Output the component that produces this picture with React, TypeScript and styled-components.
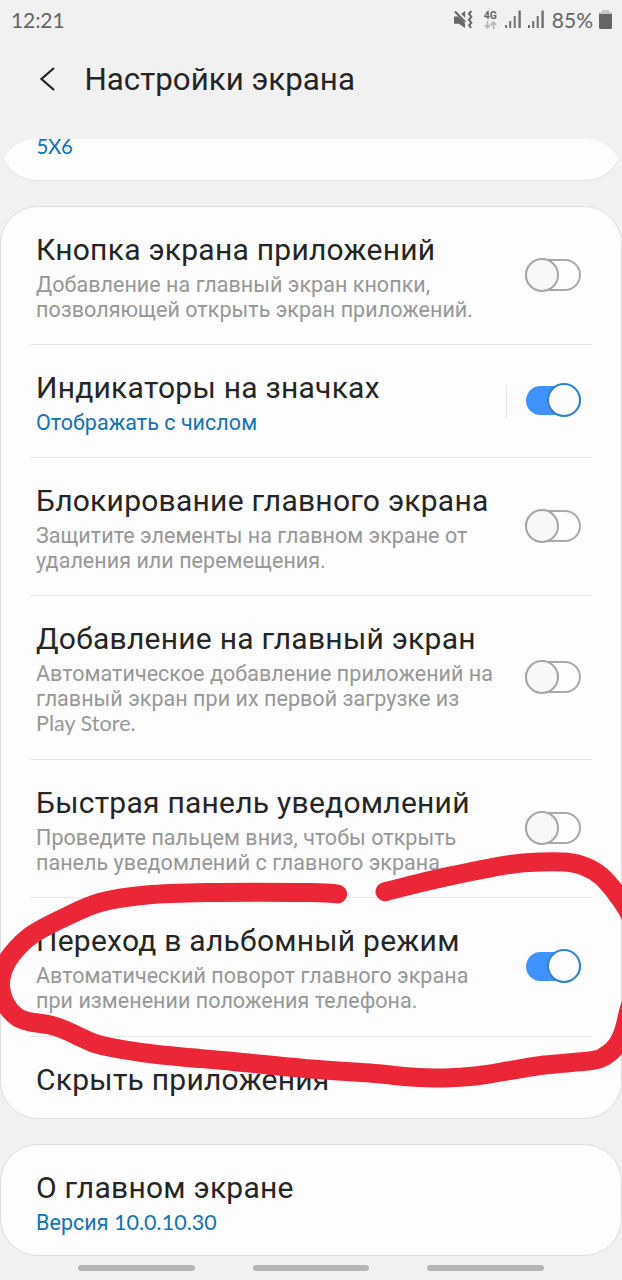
import React from "react";
import styled, { createGlobalStyle } from "styled-components";

const GlobalStyle = createGlobalStyle`
  * { box-sizing: border-box; }
  body { margin: 0; background: #f1f1f1; }
`;

const latin = `Lato, "Noto Sans", sans-serif`;

const Screen = styled.div`
  position: relative;
  display: flex;
  flex-direction: column;
  width: 622px;
  height: 1280px;
  overflow: hidden;
  background: #f1f1f1;
  color: #252525;
  font-family: Roboto, "Noto Sans", sans-serif;
`;

const StatusBar = styled.header`
  display: flex;
  justify-content: space-between;
  align-items: center;
  height: 40px;
  padding: 0 10px 0 11px;
  color: #666;
  font-family: ${latin};
  font-size: 21px;
  line-height: 40px;
`;

const Clock = styled.span`
  letter-spacing: -0.1px;
`;

const StatusIcons = styled.div`
  display: flex;
  align-items: center;
  height: 40px;
`;

const Network = styled.div`
  display: flex;
  flex-direction: column;
  align-items: center;
  width: 14px;
  margin: 0 8px 1px 10px;
  font: 700 10.5px/10px Roboto, sans-serif;
`;

const BatteryLevel = styled.span`
  margin: 0 6px 0 7px;
`;

const TitleBar = styled.div`
  display: flex;
  align-items: center;
  height: 99px;
  padding: 0 0 19px 38px;
`;

const BackIcon = styled.svg`
  width: 18px;
  height: 26px;
  margin: 0 28.5px 2px 0;
`;

const PageTitle = styled.h1`
  margin: 0;
  font-size: 31.3px;
  font-weight: 400;
  line-height: 40px;
  white-space: nowrap;
`;

const ScrollArea = styled.main`
  display: flex;
  flex-direction: column;
  gap: 25px;
  flex: none;
  height: 1118px;
  border-radius: 36px 36px 0 0;
  overflow: hidden;
`;

const Card = styled.section<{ $cut?: boolean }>`
  flex: none;
  background: #fdfdfd;
  border: 1px solid #dedede;
  border-radius: ${(p) => (p.$cut ? "0 0 36px 36px" : "38px")};
  ${(p) => p.$cut && "border-color: #e4e4e4; border-top: 0; height: 42px; padding-left: 35.5px;"}
`;

const GridValue = styled.div`
  color: #1272b6;
  font: 400 20.5px/15px ${latin};
  letter-spacing: -0.3px;
`;

const Row = styled.div<{ $h: number }>`
  display: flex;
  align-items: center;
  height: ${(p) => p.$h}px;
  padding: 0 40px 0 35px;
`;

const Labels = styled.div`
  flex: 1;
  align-self: flex-start;
  padding-top: 24px;
  white-space: nowrap;
`;

const RowTitle = styled.h2`
  margin: 0 0 3px;
  font-size: 30px;
  font-weight: 400;
  line-height: 38px;
  letter-spacing: 0.25px;
`;

const Description = styled.p<{ $accent?: boolean }>`
  margin: 0;
  height: 25.2px;
  font-size: 21.5px;
  line-height: 25.2px;
  letter-spacing: 0.04px;
  color: ${(p) => (p.$accent ? "#1272b6" : "#979797")};
`;

const LatinText = styled.span`
  font-family: ${latin};
  line-height: 1;
`;

const Separator = styled.hr`
  height: 1px;
  margin: 0 29px;
  border: 0;
  background: #e8e8e8;
`;

const SwitchDivider = styled.span`
  width: 1px;
  height: 33px;
  margin-right: 19px;
  background: #e4e4e4;
`;

const Switch = styled.span<{ $on?: boolean }>`
  display: flex;
  align-items: center;
  justify-content: ${(p) => (p.$on ? "flex-end" : "flex-start")};
  width: ${(p) => (p.$on ? 55 : 56)}px;
  height: ${(p) => (p.$on ? 29 : 32)}px;
  margin-bottom: 2px;
  border: ${(p) => (p.$on ? "0" : "2px solid #a9a9a9")};
  border-radius: 17px;
  background: ${(p) => (p.$on ? "#4093ff" : "#fdfdfd")};
`;

const Thumb = styled.span<{ $on?: boolean }>`
  flex: none;
  width: 34px;
  height: 34px;
  margin-left: ${(p) => (p.$on ? 0 : -2)}px;
  border: 2px solid ${(p) => (p.$on ? "#2f83c6" : "#a6a6a6")};
  border-radius: 50%;
  background: ${(p) => (p.$on ? "#fdfdfd" : "#f8f8f8")};
`;

const NavBar = styled.nav`
  display: flex;
  justify-content: center;
  gap: 58px;
  padding-top: 8px;
`;

const NavHint = styled.span`
  width: 116.5px;
  height: 6px;
  border-radius: 3px;
  background: #b5b5b5;
`;

const Marker = styled.svg`
  position: absolute;
  inset: 0;
  pointer-events: none;
`;

type Point = [number, number];

const upperStroke: Point[] = [
  [385, 891.7], [444.3, 877.3], [511, 864.3], [541, 862], [567.7, 862.3],
  [585, 866.5], [601, 876], [615, 891.7], [628, 911], [640, 940],
];

const lowerStroke: Point[] = [
  [337.6, 894], [311, 892.5], [206.7, 892.5], [146.7, 895], [100, 902.5],
  [63.3, 918], [31.7, 935], [12, 954], [3, 970], [0.5, 987], [5.5, 1004],
  [16.7, 1016.7], [28.3, 1021.5], [50, 1025], [65, 1030], [83.3, 1038.5],
  [101.7, 1045.5], [153.3, 1054], [233.3, 1061.5], [311, 1069], [374.3, 1073.5],
  [411, 1077], [444.3, 1078], [477.7, 1075.7], [511, 1070.3], [544.3, 1065],
  [591, 1060.7], [605, 1056], [617, 1045], [624, 1030], [629, 1010], [636, 990],
];

/* Smooth curve through all the points of a hand-drawn stroke. */
function smooth(pts: Point[]): string {
  let d = `M${pts[0][0]} ${pts[0][1]}`;
  for (let i = 0; i < pts.length - 1; i++) {
    const a = pts[Math.max(i - 1, 0)];
    const b = pts[i];
    const c = pts[i + 1];
    const e = pts[Math.min(i + 2, pts.length - 1)];
    d += ` C${b[0] + (c[0] - a[0]) / 6} ${b[1] + (c[1] - a[1]) / 6} ${c[0] - (e[0] - b[0]) / 6} ${c[1] - (e[1] - b[1]) / 6} ${c[0]} ${c[1]}`;
  }
  return d;
}

const MuteIcon = styled.svg`
  width: 20px;
  height: 20px;
  margin-bottom: 1px;
`;

const Mute = () => (
  <MuteIcon viewBox="0 0 20 20" fill="#666">
    <path d="M1 6.5H5L12 13.5V18L6 13.8H1Z" />
    <path d="M8.2 3.8L12.2 1V8Z" />
    <path d="M2 1.5L12 12" stroke="#666" strokeWidth="2.2" />
    <path d="M18.3 1L16 3.8L18.3 6.8L16 9.8L18.3 12.8L16.2 15.4L18 18" fill="none" stroke="#666" strokeWidth="2" />
  </MuteIcon>
);

const DataArrows = () => (
  <svg width="13" height="8" viewBox="0 0 13 8" fill="none" stroke="#b4b4b4" strokeWidth="1.7">
    <path d="M3.5 0V6.5M0.8 4L3.5 6.8L6.2 4M9.5 8V1.2M6.8 3.8L9.5 1.2L12.2 3.8" />
  </svg>
);

const SignalIcon = styled.svg<{ $last?: boolean }>`
  width: 16px;
  height: 18px;
  margin: 0 ${(p) => (p.$last ? 1 : 6.5)}px 2px 0;
  fill: #707070;
`;

const Signal = ({ last }: { last?: boolean }) => (
  <SignalIcon $last={last} viewBox="0 0 16 18">
    <rect x="0" y="15" width="2" height="3" />
    <rect x="4.2" y="11" width="2" height="7" />
    <rect x="8.7" y="6" width="2" height="12" />
    <rect x="13.4" y="0.5" width="2.4" height="17.5" />
  </SignalIcon>
);

const BatteryIcon = styled.svg`
  width: 13px;
  height: 19px;
  margin-bottom: 2px;
`;

const Battery = () => (
  <BatteryIcon viewBox="0 0 13 19">
    <path d="M3 0H10V2H13V6H0V2H3Z" fill="#c6c6c6" />
    <path d="M0 4H13V17.5Q13 19 11.5 19H1.5Q0 19 0 17.5Z" fill="#666" />
  </BatteryIcon>
);

interface Item {
  title: string;
  lines: React.ReactNode[];
  height: number;
  on?: boolean;
  toggle?: boolean;
  accent?: boolean;
  divided?: boolean;
}

const items: Item[] = [
  { title: "Кнопка экрана приложений", lines: ["Добавление на главный экран кнопки,", "позволяющей открыть экран приложений."], height: 137, toggle: true },
  { title: "Индикаторы на значках", lines: ["Отображать с числом"], height: 112, toggle: true, on: true, accent: true, divided: true },
  { title: "Блокирование главного экрана", lines: ["Защитите элементы на главном экране от", "удаления или перемещения."], height: 137, toggle: true },
  { title: "Добавление на главный экран", lines: ["Автоматическое добавление приложений на", "главный экран при их первой загрузке из", <LatinText key="store">Play Store.</LatinText>], height: 163, toggle: true },
  { title: "Быстрая панель уведомлений", lines: ["Проведите пальцем вниз, чтобы открыть", "панель уведомлений с главного экрана."], height: 137, toggle: true },
  { title: "Переход в альбомный режим", lines: ["Автоматический поворот главного экрана", "при изменении положения телефона."], height: 138, toggle: true, on: true },
  { title: "Скрыть приложения", lines: [], height: 81 },
];

export default function App() {
  return (
    <>
      <GlobalStyle />
      <Screen>
        <StatusBar>
          <Clock>12:21</Clock>
          <StatusIcons>
            <Mute />
            <Network>
              4G
              <DataArrows />
            </Network>
            <Signal />
            <Signal last />
            <BatteryLevel>85%</BatteryLevel>
            <Battery />
          </StatusIcons>
        </StatusBar>
        <TitleBar>
          <BackIcon viewBox="0 0 18 26" fill="none" stroke="#252525" strokeWidth="2.3">
            <path d="M16 2L3.5 13L16 24" />
          </BackIcon>
          <PageTitle>Настройки экрана</PageTitle>
        </TitleBar>
        <ScrollArea>
          <Card $cut>
            <GridValue>5X6</GridValue>
          </Card>
          <Card>
            {items.map((item, i) => (
              <React.Fragment key={item.title}>
                {i > 0 && <Separator />}
                <Row $h={item.height}>
                  <Labels>
                    <RowTitle>{item.title}</RowTitle>
                    {item.lines.map((line, n) => (
                      <Description key={n} $accent={item.accent}>{line}</Description>
                    ))}
                  </Labels>
                  {item.divided && <SwitchDivider />}
                  {item.toggle && (
                    <Switch $on={item.on}>
                      <Thumb $on={item.on} />
                    </Switch>
                  )}
                </Row>
              </React.Fragment>
            ))}
          </Card>
          <Card>
            <Row $h={110}>
              <Labels>
                <RowTitle>О главном экране</RowTitle>
                <Description $accent>
                  Версия <LatinText>10.0.10.30</LatinText>
                </Description>
              </Labels>
            </Row>
          </Card>
        </ScrollArea>
        <NavBar>
          <NavHint />
          <NavHint />
          <NavHint />
        </NavBar>
        <Marker width="622" height="1280" viewBox="0 0 622 1280" fill="none" stroke="#eb2737" strokeWidth="19" strokeLinecap="round" strokeLinejoin="round">
          <path d={smooth(upperStroke)} />
          <path d={smooth(lowerStroke)} />
        </Marker>
      </Screen>
    </>
  );
}
